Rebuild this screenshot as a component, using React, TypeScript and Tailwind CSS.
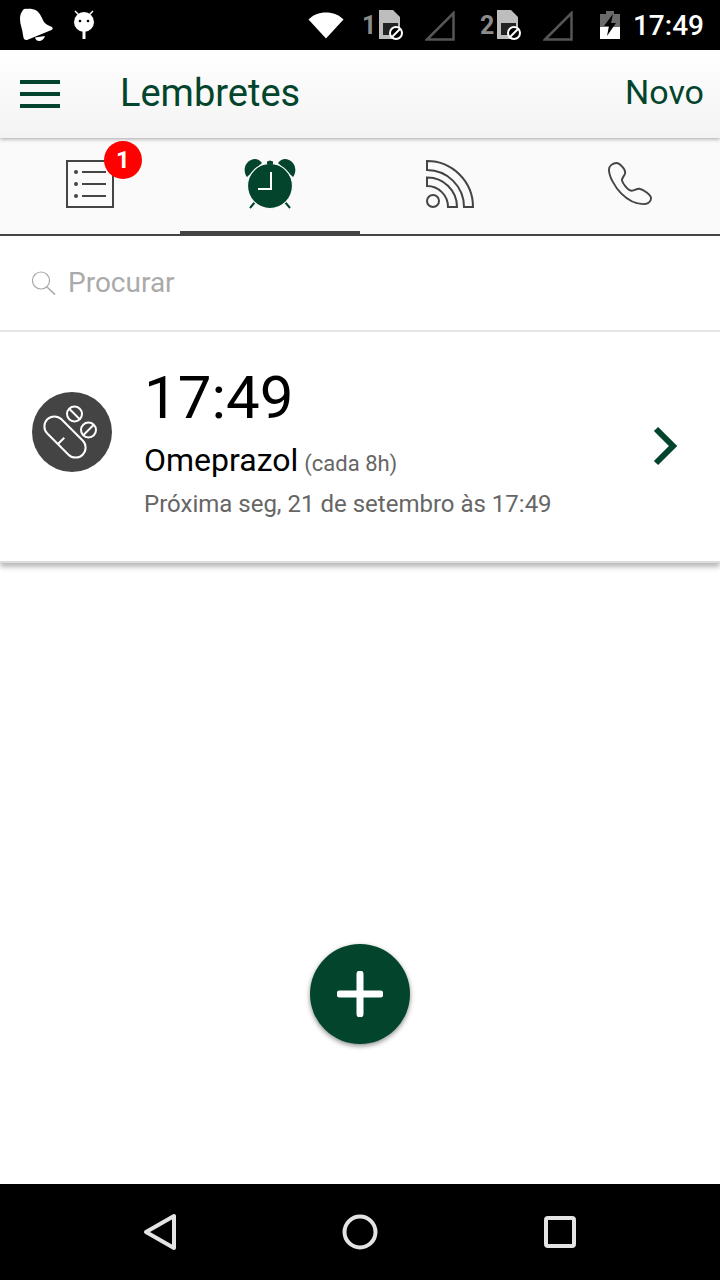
const GREEN = "#03452c";

const Bell = () => (
  <svg width="36" height="36" viewBox="0 0 36 36" fill="#fff">
    <path d="M1.700 5C3 2 5 1 7 2c2-.5 7 0 9.700 1.700C20 6 22 11 24 15c2 3 5 3.500 8 5 1 1 1 2-.5 3L7 33c-2 .5-3.500-.5-4-5-.5-6-3-10-3-16 0-3 .5-5 1.700-7z" />
    <path d="M15 30.500c1 5 8 5 10-1.500z" />
  </svg>
);

const Android = () => (
  <svg width="24" height="32" viewBox="0 0 24 32" fill="#fff">
    <path d="M3 2l4 4M21 2l-4 4" stroke="#fff" strokeWidth="1.500" />
    <circle cx="12" cy="13" r="10" />
    <circle cx="8" cy="12" r="1.300" fill="#000" />
    <circle cx="16" cy="12" r="1.300" fill="#000" />
    <rect x="10.500" y="22" width="3" height="8" />
  </svg>
);

const Wifi = () => (
  <svg width="36" height="28" viewBox="0 0 36 28" fill="#fff">
    <path d="M18 27.500L.500 8.500C5 4 11 1.500 18 1.500s13 2.500 17.500 7L18 27.500z" />
  </svg>
);

const Sim = ({ n }: { n: string }) => (
  <div className="flex items-center gap-[2px]">
    <span className="w-[14px] text-[25px] font-bold leading-none text-[#8c8c8c]">{n}</span>
    <svg width="26" height="32" viewBox="0 0 26 32">
      <path d="M1 1h14l7 7v22H1z" fill="#bdbdbd" />
      <rect x="5" y="14" width="15" height="12" fill="#222" />
      <circle cx="18" cy="24" r="6" fill="#000" stroke="#fff" strokeWidth="2" />
      <path d="M14 28l8-8" stroke="#fff" strokeWidth="2" />
    </svg>
  </div>
);

const Signal = () => (
  <svg width="30" height="30" viewBox="0 0 30 30" fill="none" className="mt-[2px]">
    <path d="M2 28.500L28.500 2v26.500z" stroke="#555" strokeWidth="2.500" />
  </svg>
);

const Battery = () => (
  <svg width="20" height="28" viewBox="0 0 20 28">
    <path d="M6 0h8v3h6v25H0V3h6z" fill="#6b6b6b" />
    <path d="M0 16h20v12H0z" fill="#fff" />
    <path d="M13 3L4 15h5l-2 10 9-13h-5z" fill="#000" />
  </svg>
);

const ListIcon = () => (
  <svg width="48" height="48" viewBox="0 0 48 48" fill="none" stroke="#444" strokeWidth="2">
    <rect x="1" y="1" width="46" height="46" />
    <circle cx="10" cy="12" r="1" fill="#444" />
    <circle cx="10" cy="24" r="1" fill="#444" />
    <circle cx="10" cy="36" r="1" fill="#444" />
    <path d="M16 12h24M16 24h24M16 36h24" />
  </svg>
);

const AlarmIcon = () => (
  <svg width="52" height="52" viewBox="0 0 52 52" fill={GREEN}>
    <path d="M3 19C-1 14 0 5 7 2c4-2 8-1 11 3z" />
    <path d="M49 19c4-5 3-14-4-17-4-2-8-1-11 3z" />
    <path d="M11 44l-5 6M41 44l5 6" stroke={GREEN} strokeWidth="2" />
    <circle cx="26" cy="28" r="22.500" stroke="#fafafa" strokeWidth="1.200" />
    <path d="M23 3.500l3-1 3 1v3h-6z" />
    <path d="M27 14v17H14" fill="none" stroke="#fff" strokeWidth="2" />
  </svg>
);

const RssIcon = () => (
  <svg width="48" height="48" viewBox="0 0 48 48" fill="none" stroke="#444" strokeWidth="2">
    <circle cx="7" cy="41" r="6" />
    <path d="M1 17.500A29.500 29.500 0 0 1 31 47h-9A21 21 0 0 0 1 26z" />
    <path d="M1 1a46 46 0 0 1 46 46h-9A37 37 0 0 0 1 10z" />
  </svg>
);

const PhoneIcon = () => (
  <svg width="44" height="44" viewBox="0 0 46 46" fill="none" stroke="#444" strokeWidth="2">
    <path d="M1 8c0-4 4-7 8-7 3 0 9 6 9 10 0 3-3.500 5-3.500 8 .5 3 6.500 11 10.500 11 3 0 5-2.500 8-2 4 1 12 6 12 10s-4 6-8 6c-7 0-16-4-23-11S1 15 1 8z" />
  </svg>
);

const PillIcon = () => (
  <svg width="80" height="80" viewBox="0 0 80 80" fill="none" stroke="#fff" strokeWidth="2">
    <circle cx="40" cy="40" r="40" fill="#444" stroke="none" />
    <g transform="rotate(45 33 45)">
      <rect x="8" y="35" width="50" height="20" rx="10" />
      <path d="M33 46v9" />
    </g>
    <circle cx="42.500" cy="22" r="7.500" />
    <path d="M37.500 17l10 10" />
    <circle cx="56.500" cy="38" r="7.500" />
    <path d="M51.500 43l10-10" />
  </svg>
);

export default function App() {
  return (
    <div className="relative flex h-[1280px] w-[720px] flex-col overflow-hidden bg-white font-['Roboto',sans-serif]">
      {/* status bar */}
      <div className="flex h-[50px] shrink-0 items-center bg-black pl-[20px] pr-[16px]">
        <Bell />
        <div className="ml-[16px]">
          <Android />
        </div>
        <div className="ml-auto flex items-center">
          <Wifi />
          <div className="ml-[18px]"><Sim n="1" /></div>
          <div className="ml-[21px]"><Signal /></div>
          <div className="ml-[25px]"><Sim n="2" /></div>
          <div className="ml-[21px]"><Signal /></div>
          <div className="ml-[27px]"><Battery /></div>
          <span className="ml-[13px] mt-[2px] text-[28px] font-medium leading-none text-white">17:49</span>
        </div>
      </div>

      {/* header */}
      <header className="z-10 flex h-[88px] shrink-0 items-center bg-gradient-to-b from-white to-[#f3f3f3] pl-[20px] pr-[16px] shadow-[0_1px_4px_rgba(0,0,0,0.35)]">
        <div className="flex w-[40px] flex-col gap-[8px]">
          <div className="h-[4px] bg-[#03452c]" />
          <div className="h-[4px] bg-[#03452c]" />
          <div className="h-[4px] bg-[#03452c]" />
        </div>
        <h1 className="ml-[60px] -mt-[2px] text-[38px] font-normal text-[#03452c]">Lembretes</h1>
        <span className="ml-auto -mt-[4px] text-[34px] text-[#03452c]">Novo</span>
      </header>

      {/* tabs */}
      <nav className="grid h-[98px] shrink-0 grid-cols-4 border-b-2 border-[#444] bg-[#fafafa]">
        <div className="relative flex items-center justify-center pb-[4px]">
          <ListIcon />
          <span className="absolute left-[104px] top-[3px] flex h-[38px] w-[38px] items-center justify-center rounded-full bg-[#f00] text-[24px] font-bold text-white">1</span>
        </div>
        <div className="flex items-center justify-center border-b-[3px] border-[#444] pb-[2px]">
          <AlarmIcon />
        </div>
        <div className="flex items-center justify-center pb-[4px]">
          <RssIcon />
        </div>
        <div className="flex items-center justify-center pb-[4px]">
          <PhoneIcon />
        </div>
      </nav>

      {/* search */}
      <div className="flex h-[96px] shrink-0 items-center gap-[12px] border-b-2 border-[#e8e8e8] pl-[32px]">
        <svg width="24" height="24" viewBox="0 0 24 24" fill="none" stroke="#aaa" strokeWidth="1.200">
          <circle cx="9" cy="9.500" r="8.500" />
          <path d="M15 16l8 7.500" strokeWidth="1.600" />
        </svg>
        <span className="text-[28px] text-[#aaa]">Procurar</span>
      </div>

      {/* reminder */}
      <div className="flex h-[231px] shrink-0 items-start border-b-2 border-[#ddd] px-[32px] shadow-[0_4px_5px_rgba(0,0,0,0.28)]">
        <div className="mt-[60px]">
          <PillIcon />
        </div>
        <div className="ml-[32px] flex flex-col">
          <span className="mt-[31px] text-[60px] leading-[70px] text-black">17:49</span>
          <div className="mt-[9px] flex items-baseline gap-[6px]">
            <span className="text-[32px] leading-[36px] text-black">Omeprazol</span>
            <span className="text-[22px] text-[#666]">(cada 8h)</span>
          </div>
          <span className="mt-[9px] text-[24px] leading-[30px] text-[#666]">Próxima seg, 21 de setembro às 17:49</span>
        </div>
        <svg width="26" height="40" viewBox="0 0 26 40" fill="none" stroke={GREEN} strokeWidth="6" className="ml-auto mr-[9px] mt-[94px]">
          <path d="M3 3l17 17L3 37" />
        </svg>
      </div>

      {/* fab */}
      <button className="absolute left-[310px] top-[944px] flex h-[100px] w-[100px] items-center justify-center rounded-full bg-[#03452c] shadow-[0_2px_5px_rgba(0,0,0,0.45)]">
        <svg width="46" height="46" viewBox="0 0 46 46">
          <path d="M23 3v40M3 23h40" stroke="#fff" strokeWidth="7" strokeLinecap="round" />
        </svg>
      </button>

      {/* nav bar */}
      <div className="mt-auto flex h-[96px] shrink-0 items-center justify-center gap-[160px] bg-black">
        <svg width="40" height="44" viewBox="0 0 40 44" fill="none" stroke="#e4e4e4" strokeWidth="4">
          <path d="M6 22L34 6v32z" strokeLinejoin="round" />
        </svg>
        <svg width="40" height="40" viewBox="0 0 40 40" fill="none" stroke="#e4e4e4" strokeWidth="4">
          <circle cx="20" cy="20" r="15.500" />
        </svg>
        <svg width="40" height="40" viewBox="0 0 40 40" fill="none" stroke="#e4e4e4" strokeWidth="4">
          <rect x="6" y="6" width="28" height="28" rx="2" />
        </svg>
      </div>
    </div>
  );
}
